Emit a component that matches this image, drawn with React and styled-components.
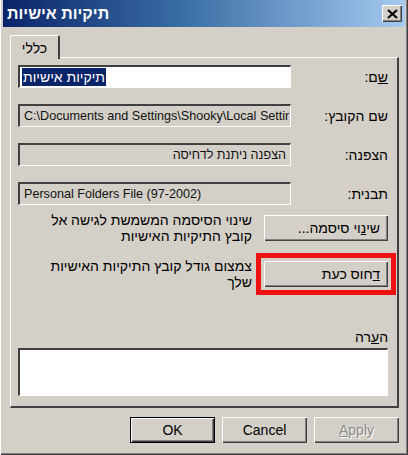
import styled, { createGlobalStyle } from "styled-components";

const Global = createGlobalStyle`
  html, body { margin: 0; padding: 0; background: #d4d0c8; }
  * { box-sizing: border-box; }
`;

const face = `"Liberation Sans", "DejaVu Sans", sans-serif`;

function App() {
  return (
    <Window>
      <Global />
      <TitleBar>
        <Title>תיקיות אישיות</Title>
        <CloseBox>
          <svg width="11" height="10" viewBox="0 0 11 10">
            <path d="M1 1 L10 9 M10 1 L1 9" stroke="#000" strokeWidth="2.2" />
          </svg>
        </CloseBox>
      </TitleBar>
      <Body>
        <TabStrip>
          <Tab>כללי</Tab>
        </TabStrip>
        <Panel>
          <Fields>
            <Label><u>ש</u>ם:</Label>
            <Field $white $ltr>
              <Selected>תיקיות אישיות</Selected>
            </Field>
            <Label>שם הקובץ:</Label>
            <Field $ltr>C:\Documents and Settings\Shooky\Local Settir</Field>
            <Label>הצפנה:</Label>
            <Field>הצפנה ניתנת לדחיסה</Field>
            <Label>תבנית:</Label>
            <Field $ltr>Personal Folders File (97-2002)</Field>
          </Fields>
          <Actions>
            <ActionRow>
              <Button $wide>שי<u>נ</u>וי סיסמה...</Button>
              <Note>שינוי הסיסמה המשמשת לגישה אל<br />קובץ התיקיות האישיות</Note>
            </ActionRow>
            <ActionRow>
              <Button $wide $marked><u>ד</u>חוס כעת</Button>
              <Note>צמצום גודל קובץ התיקיות האישיות<br />שלך</Note>
            </ActionRow>
          </Actions>
          <CommentLabel>ה<u>ע</u>רה</CommentLabel>
          <Comment />
        </Panel>
        <Footer>
          <Button $default>OK</Button>
          <Button>Cancel</Button>
          <Button $disabled><u>A</u>pply</Button>
        </Footer>
      </Body>
    </Window>
  );
}

export default App;

const Window = styled.div`
  width: 408px;
  height: 455px;
  background: #d4d0c8;
  display: flex;
  flex-direction: column;
  padding: 0 3px 3px 3px;
  box-shadow: inset 1px 0 0 #ffffff, inset -1px -1px 0 #404040, inset -2px -2px 0 #808080;
  font-family: ${face};
  font-size: 13px;
  color: #000;
`;

const TitleBar = styled.div`
  height: 27px;
  background: linear-gradient(to right, #0a246a 0%, #3a6ea5 45%, #a6caf0 100%);
  display: flex;
  align-items: center;
  justify-content: space-between;
  padding: 0 3px 0 4px;
`;

const Title = styled.div`
  color: #fff;
  font-weight: bold;
  font-size: 16px;
  direction: rtl;
`;

const CloseBox = styled.div`
  width: 20px;
  height: 17px;
  background: #d4d0c8;
  display: flex;
  align-items: center;
  justify-content: center;
  box-shadow: inset 1px 1px 0 #fff, inset -1px -1px 0 #404040, inset -2px -2px 0 #808080;
`;

const Body = styled.div`
  flex: 1;
  display: flex;
  flex-direction: column;
  padding: 8px 6px 0 7px;
`;

const TabStrip = styled.div`
  display: flex;
  height: 22px;
  position: relative;
  z-index: 1;
`;

const Tab = styled.div`
  width: 50px;
  height: 24px;
  background: #d4d0c8;
  display: flex;
  align-items: center;
  justify-content: center;
  font-size: 14px;
  border-top: 1px solid #fff;
  border-left: 1px solid #fff;
  border-right: 2px solid #404040;
  border-radius: 2px 2px 0 0;
  direction: rtl;
`;

const Panel = styled.div`
  height: 351px;
  display: flex;
  flex-direction: column;
  direction: rtl;
  padding: 7px 9px 10px 7px;
  border-top: 1px solid #fff;
  border-left: 1px solid #fff;
  border-right: 2px solid #404040;
  border-bottom: 2px solid #404040;
`;

const Fields = styled.div`
  display: grid;
  grid-template-columns: 1fr 273px;
  row-gap: 16px;
  align-items: center;
`;

const Label = styled.div`
  font-size: 14px;
  text-align: right;
`;

const Field = styled.div`
  height: 23px;
  padding: 0 4px;
  display: flex;
  align-items: center;
  white-space: nowrap;
  overflow: hidden;
  direction: ${(p) => (p.$ltr ? "ltr" : "rtl")};
  background: ${(p) => (p.$white ? "#fff" : "#d4d0c8")};
  border-top: 2px solid #404040;
  border-left: 2px solid #404040;
  border-bottom: 1px solid #fff;
  border-right: 1px solid #fff;
  font-size: 12.6px;
  color: #111;
`;

const Selected = styled.span`
  background: #0a246a;
  color: #fff;
  padding: 1px 1px;
  margin-left: -2px;
  font-size: 14px;
`;

const Actions = styled.div`
  display: flex;
  flex-direction: column;
  gap: 14px;
  margin-top: 7px;
`;

const ActionRow = styled.div`
  display: flex;
  align-items: center;
  gap: 12px;
`;

const Button = styled.button`
  width: ${(p) => (p.$wide ? "124px" : "85px")};
  height: 26px;
  flex: none;
  background: #d4d0c8;
  border: none;
  font-family: ${face};
  font-size: 14px;
  color: ${(p) => (p.$disabled ? "#8a8a8a" : "#000")};
  text-shadow: ${(p) => (p.$disabled ? "1px 1px 0 #fff" : "none")};
  direction: ${(p) => (p.$wide ? "rtl" : "ltr")};
  text-align: ${(p) => (p.$wide ? "right" : "center")};
  padding: ${(p) => (p.$wide ? "0 8px" : "0")};
  box-shadow: ${(p) =>
    p.$default
      ? "inset 0 0 0 1px #000, inset 1px 1px 0 1px #fff, inset -1px -1px 0 1px #404040, inset -2px -2px 0 1px #808080"
      : "inset 1px 1px 0 #fff, inset -1px -1px 0 #404040, inset -2px -2px 0 #808080"};
  outline: ${(p) => (p.$marked ? "5px solid #ee1111" : "none")};
  outline-offset: 3px;
`;

const Note = styled.div`
  font-size: 14px;
  line-height: 16px;
  text-align: right;
`;

const CommentLabel = styled.div`
  margin-top: auto;
  font-size: 14px;
  text-align: right;
  margin-bottom: 3px;
`;

const Comment = styled.div`
  height: 48px;
  background: #fff;
  border-top: 2px solid #404040;
  border-left: 2px solid #404040;
  border-bottom: 1px solid #fff;
  border-right: 1px solid #fff;
`;

const Footer = styled.div`
  display: flex;
  justify-content: flex-end;
  gap: 7px;
  padding-top: 9px;
`;
